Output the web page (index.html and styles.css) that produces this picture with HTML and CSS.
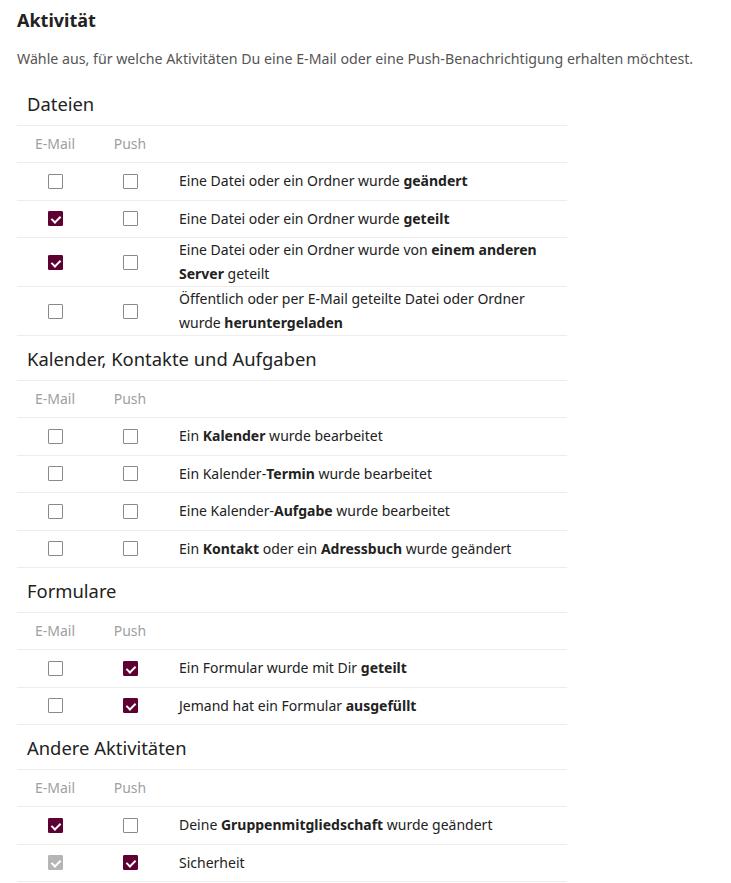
FILE: index.html
```html
<!DOCTYPE html>
<html lang="de">
<head>
<meta charset="utf-8">
<title>Aktivität</title>
<link rel="stylesheet" href="styles.css">
</head>
<body>
<div class="page">
  <h2 class="title">Aktivität</h2>
  <p class="desc">Wähle aus, für welche Aktivitäten Du eine E-Mail oder eine Push-Benachrichtigung erhalten möchtest.</p>

  <section class="group">
    <h3 class="group-title">Dateien</h3>
    <div class="table">
      <div class="row head"><span class="col">E-Mail</span><span class="col">Push</span><span></span></div>
      <div class="row"><span class="col"><i class="cb"></i></span><span class="col"><i class="cb"></i></span><span class="label">Eine Datei oder ein Ordner wurde <b>geändert</b></span></div>
      <div class="row"><span class="col"><i class="cb on"></i></span><span class="col"><i class="cb"></i></span><span class="label">Eine Datei oder ein Ordner wurde <b>geteilt</b></span></div>
      <div class="row"><span class="col"><i class="cb on"></i></span><span class="col"><i class="cb"></i></span><span class="label">Eine Datei oder ein Ordner wurde von <b>einem anderen Server</b> geteilt</span></div>
      <div class="row"><span class="col"><i class="cb"></i></span><span class="col"><i class="cb"></i></span><span class="label">Öffentlich oder per E-Mail geteilte Datei oder Ordner wurde <b>heruntergeladen</b></span></div>
    </div>
  </section>

  <section class="group">
    <h3 class="group-title">Kalender, Kontakte und Aufgaben</h3>
    <div class="table">
      <div class="row head"><span class="col">E-Mail</span><span class="col">Push</span><span></span></div>
      <div class="row"><span class="col"><i class="cb"></i></span><span class="col"><i class="cb"></i></span><span class="label">Ein <b>Kalender</b> wurde bearbeitet</span></div>
      <div class="row"><span class="col"><i class="cb"></i></span><span class="col"><i class="cb"></i></span><span class="label">Ein Kalender-<b>Termin</b> wurde bearbeitet</span></div>
      <div class="row"><span class="col"><i class="cb"></i></span><span class="col"><i class="cb"></i></span><span class="label">Eine Kalender-<b>Aufgabe</b> wurde bearbeitet</span></div>
      <div class="row"><span class="col"><i class="cb"></i></span><span class="col"><i class="cb"></i></span><span class="label">Ein <b>Kontakt</b> oder ein <b>Adressbuch</b> wurde geändert</span></div>
    </div>
  </section>

  <section class="group">
    <h3 class="group-title">Formulare</h3>
    <div class="table">
      <div class="row head"><span class="col">E-Mail</span><span class="col">Push</span><span></span></div>
      <div class="row"><span class="col"><i class="cb"></i></span><span class="col"><i class="cb on"></i></span><span class="label">Ein Formular wurde mit Dir <b>geteilt</b></span></div>
      <div class="row"><span class="col"><i class="cb"></i></span><span class="col"><i class="cb on"></i></span><span class="label">Jemand hat ein Formular <b>ausgefüllt</b></span></div>
    </div>
  </section>

  <section class="group">
    <h3 class="group-title">Andere Aktivitäten</h3>
    <div class="table">
      <div class="row head"><span class="col">E-Mail</span><span class="col">Push</span><span></span></div>
      <div class="row"><span class="col"><i class="cb on"></i></span><span class="col"><i class="cb"></i></span><span class="label">Deine <b>Gruppenmitgliedschaft</b> wurde geändert</span></div>
      <div class="row"><span class="col"><i class="cb on disabled"></i></span><span class="col"><i class="cb on"></i></span><span class="label">Sicherheit</span></div>
    </div>
  </section>
</div>
</body>
</html>
```

FILE: styles.css
```css
* { box-sizing: border-box; }
body {
  margin: 0;
  font-family: "Noto Sans", "Open Sans", sans-serif;
  color: #222;
  background: #fff;
}
.page {
  padding: 8px 17px 0 17px;
}
.title {
  margin: 0;
  font-size: 18px;
  font-weight: 700;
  line-height: 24px;
  color: #222;
}
.desc {
  margin: 17px 0 12px 0;
  font-size: 14.2px;
  line-height: 20px;
  color: #555;
}
.group {
  width: 550px;
}
.group-title {
  margin: 0;
  padding-left: 10px;
  height: 44px;
  display: flex;
  align-items: center;
  font-size: 18.4px;
  font-weight: 400;
  color: #222;
}
.table {
  border-top: 1px solid #ededed;
}
.row {
  display: grid;
  grid-template-columns: 76px 74px 1fr;
  align-items: center;
  min-height: 37.5px;
  border-bottom: 1px solid #ededed;
  font-size: 14px;
  line-height: 24px;
}
.row.head {
  min-height: 37px;
  color: #a0a0a0;
}
.col {
  display: flex;
  justify-content: center;
}
.label {
  padding-left: 12px;
  color: #222;
}
.label b { font-weight: 700; }
.cb {
  display: block;
  width: 15px;
  height: 15px;
  border: 1px solid #8a8a8a;
  border-radius: 1px;
  background: #fff;
  position: relative;
}
.cb.on {
  background: #5e0031;
  border-color: #5e0031;
}
.cb.on::after {
  content: "";
  position: absolute;
  left: 4px;
  top: 2px;
  width: 4px;
  height: 7px;
  border-right: 2px solid #fff;
  border-bottom: 2px solid #fff;
  transform: rotate(45deg);
}
.cb.on.disabled {
  background: #b5b5b5;
  border-color: #b5b5b5;
}
```
